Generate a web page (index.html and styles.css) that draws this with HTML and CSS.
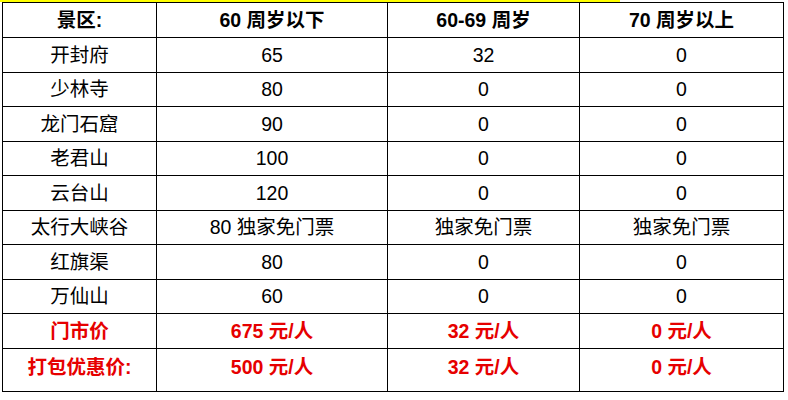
FILE: index.html
```html
<!DOCTYPE html>
<html>
<head>
<meta charset="utf-8">
<link rel="stylesheet" href="styles.css">
</head>
<body>
<div class="band"></div>
<table class="grid">
  <colgroup>
    <col class="c1"><col class="c2"><col class="c3"><col class="c4">
  </colgroup>
  <tr class="head"><th>景区:</th><th>60 周岁以下</th><th>60-69 周岁</th><th>70 周岁以上</th></tr>
  <tr><td>开封府</td><td>65</td><td>32</td><td>0</td></tr>
  <tr><td>少林寺</td><td>80</td><td>0</td><td>0</td></tr>
  <tr><td>龙门石窟</td><td>90</td><td>0</td><td>0</td></tr>
  <tr><td>老君山</td><td>100</td><td>0</td><td>0</td></tr>
  <tr><td>云台山</td><td>120</td><td>0</td><td>0</td></tr>
  <tr><td>太行大峡谷</td><td>80 独家免门票</td><td>独家免门票</td><td>独家免门票</td></tr>
  <tr><td>红旗渠</td><td>80</td><td>0</td><td>0</td></tr>
  <tr><td>万仙山</td><td>60</td><td>0</td><td>0</td></tr>
  <tr class="price"><td>门市价</td><td>675 元/人</td><td>32 元/人</td><td>0 元/人</td></tr>
  <tr class="price last"><td>打包优惠价:</td><td>500 元/人</td><td>32 元/人</td><td>0 元/人</td></tr>
</table>
</body>
</html>
```
FILE: styles.css
```css
html, body { margin: 0; padding: 0; background: #fff; }
body { width: 788px; height: 400px; overflow: hidden; }
.band { width: 620px; height: 2px; background: #ffff00; }
.grid {
  margin-left: 2px;
  border-collapse: collapse;
  table-layout: fixed;
  width: 781px;
  font-family: "Liberation Sans", "Noto Sans CJK SC", sans-serif;
  font-size: 19.5px;
  color: #000;
}
.c1 { width: 154px; }
.c2 { width: 231px; }
.c3 { width: 192px; }
.c4 { width: 204px; }
.grid th, .grid td {
  border: 1px solid #000;
  text-align: center;
  padding: 0;
  height: 33.5px;
  line-height: 22px;
}
.grid th { font-weight: bold; }
.head th { height: 34px; }
.price td { color: #e60000; font-weight: bold; }
.last td { height: 35px; vertical-align: top; padding-top: 7px; }
```
